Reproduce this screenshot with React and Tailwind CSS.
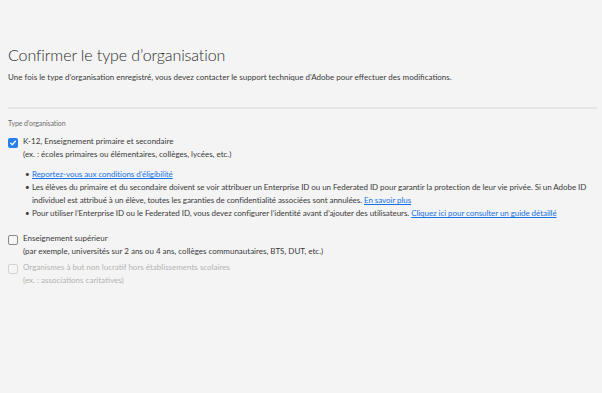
import React from "react";

const font = { fontFamily: 'Lato, "Open Sans", sans-serif' };

function Check({ checked, disabled }) {
  if (checked) {
    return (
      <span className="mt-[3px] flex h-[10px] w-[10px] shrink-0 items-center justify-center rounded-[2px] bg-[#2680eb]">
        <svg viewBox="0 0 10 10" className="h-[8px] w-[8px]">
          <path d="M2 5.2 L4.1 7.2 L8 2.8" fill="none" stroke="white" strokeWidth="1.6" strokeLinecap="round" strokeLinejoin="round" />
        </svg>
      </span>
    );
  }
  return (
    <span
      className={
        "mt-[3px] h-[10px] w-[10px] shrink-0 rounded-[2px] border bg-[#f5f5f5] " +
        (disabled ? "border-[#d3d3d3]" : "border-[#8a8a8a]")
      }
    />
  );
}

export default function App() {
  return (
    <div className="min-h-[393px] w-full bg-[#f4f4f4] text-[#4b4b4b]" style={font}>
      <div className="px-[8px] pt-[45px]">
        <h1 className="text-[16px] font-light leading-[20px] tracking-[-0.1px] text-[#2c2c2c]">
          Confirmer le type d’organisation
        </h1>
        <p className="mt-[6px] text-[8px] leading-[12px] text-[#3a3a3a]">
          Une fois le type d’organisation enregistré, vous devez contacter le support technique d’Adobe pour effectuer des modifications.
        </p>
        <div className="mt-[24px] mr-[-3px] h-[2px] bg-[#e6e6e6]" />
        <div className="mt-[9px] text-[7px] leading-[10px] tracking-[-0.1px] text-[#6e6e6e]">
          Type d’organisation
        </div>

        <div className="mt-[7px] flex gap-[5px]">
          <Check checked />
          <div className="text-[8px] leading-[13px] text-[#3a3a3a]">
            <div>K-12, Enseignement primaire et secondaire</div>
            <div>(ex. : écoles primaires ou élémentaires, collèges, lycées, etc.)</div>
          </div>
        </div>

        <ul className="mt-[7px] ml-[24px] text-[8px] leading-[13px] tracking-[-0.06px] text-[#3a3a3a]">
          <li className="relative">
            <span className="absolute left-[-7px] top-0">•</span>
            <a className="text-[#1473e6] underline">Reportez-vous aux conditions d’éligibilité</a>
          </li>
          <li className="relative">
            <span className="absolute left-[-7px] top-0">•</span>
            Les élèves du primaire et du secondaire doivent se voir attribuer un Enterprise ID ou un Federated ID pour garantir la protection de leur vie privée. Si un Adobe ID individuel est attribué à un élève, toutes les garanties de confidentialité associées sont annulées.{" "}
            <a className="text-[#1473e6] underline">En savoir plus</a>
          </li>
          <li className="relative">
            <span className="absolute left-[-7px] top-0">•</span>
            Pour utiliser l’Enterprise ID ou le Federated ID, vous devez configurer l’identité avant d’ajouter des utilisateurs.{" "}
            <a className="text-[#1473e6] underline">Cliquez ici pour consulter un guide détaillé</a>
          </li>
        </ul>

        <div className="mt-[12px] flex gap-[5px]">
          <Check />
          <div className="text-[8px] leading-[13px] text-[#3a3a3a]">
            <div>Enseignement supérieur</div>
            <div>(par exemple, universités sur 2 ans ou 4 ans, collèges communautaires, BTS, DUT, etc.)</div>
          </div>
        </div>

        <div className="mt-[3px] flex gap-[5px]">
          <Check disabled />
          <div className="text-[8px] leading-[13px] text-[#b3b3b3]">
            <div>Organismes à but non lucratif hors établissements scolaires</div>
            <div>(ex. : associations caritatives)</div>
          </div>
        </div>
      </div>
    </div>
  );
}
